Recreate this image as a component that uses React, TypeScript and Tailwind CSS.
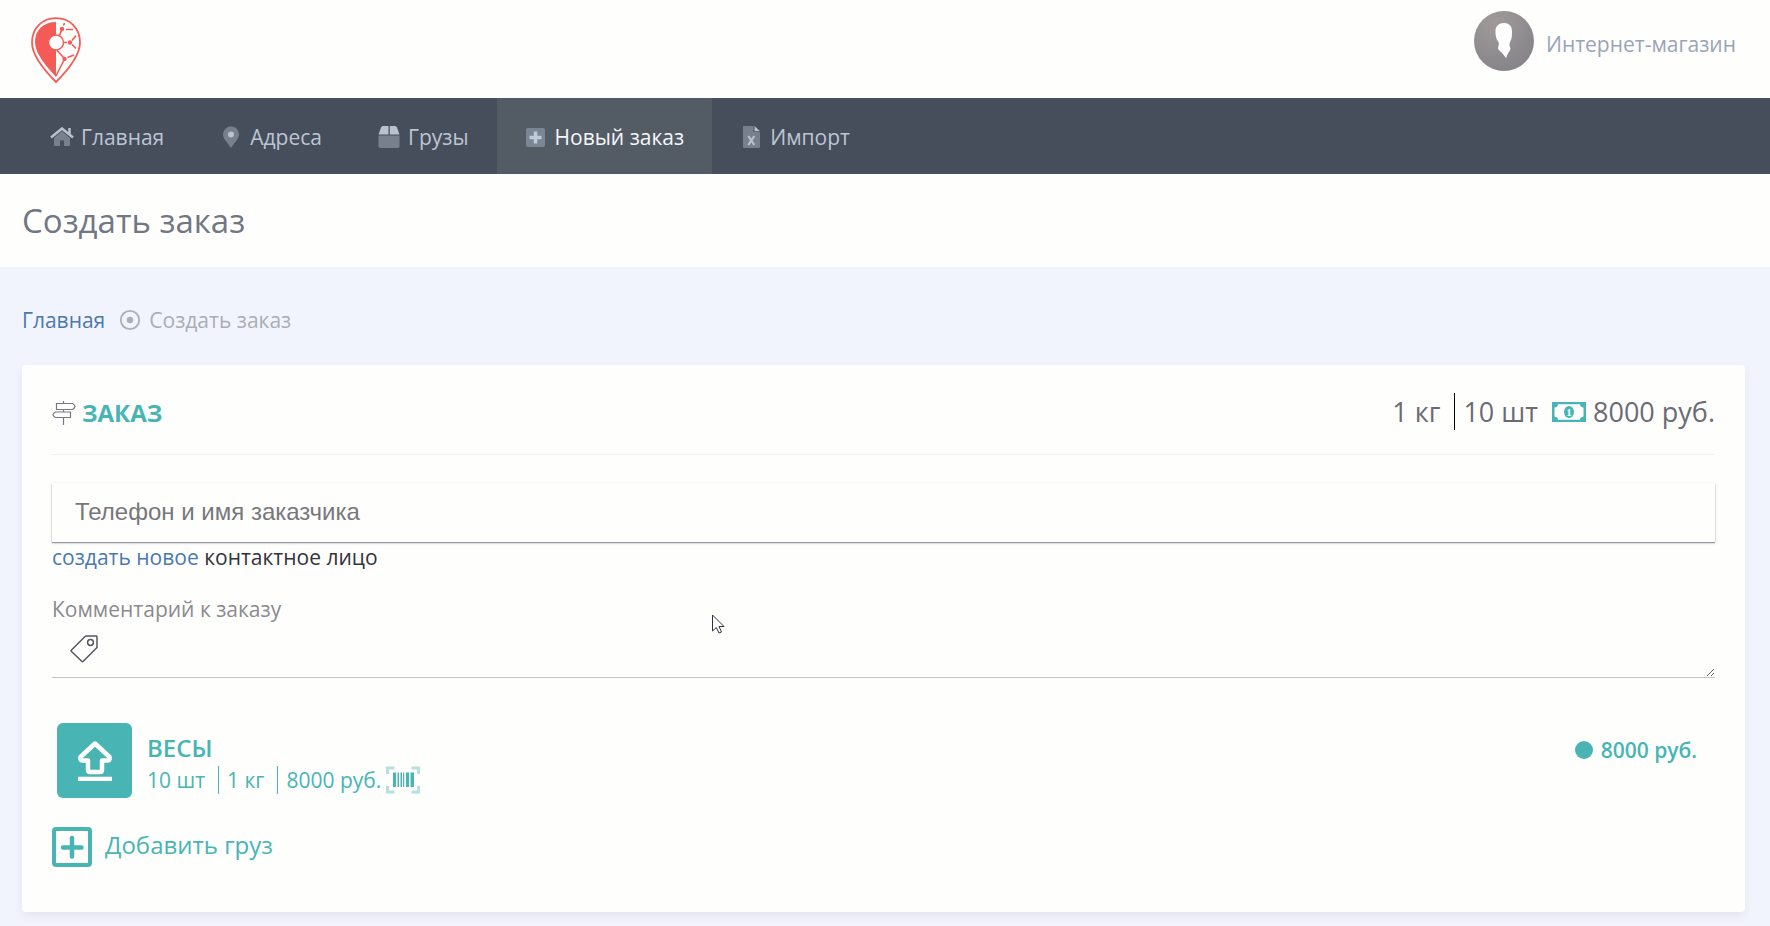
import { useState } from "react";
import type { ReactNode } from "react";

const Logo = () => (
	<svg className="h-[68px] w-[52px]" viewBox="0 0 52 68" fill="none">
		<path
			d="M26 66C18 58 2 41 2 26.500C2 12 12.500 2.200 26 2.200S50 12 50 26.500C50 41 34 58 26 66Z"
			stroke="#f45b56"
			strokeWidth="1.800"
		/>
		<path
			d="M26 6C13.500 6 5 14 5 26C5 38 17 51 26 61V34A7 7 0 0 1 26 19Z"
			fill="#f45b56"
		/>
		<circle cx="26" cy="26.500" r="7.500" stroke="#f45b56" strokeWidth="1.500" fill="#fff" />
		<g stroke="#f45b56" strokeWidth="1.600">
			<path d="M34.500 7L33.500 9.500M31.500 14L29.500 19.500M36 13.500H43" />
			<path d="M34 26.500H37M42 24.500L46 19.500M42 28.500L46 32.500" />
			<path d="M27 34.500L34.500 42.500M33.500 45L26 60M37.500 41.500L44 39" />
		</g>
		<g fill="#f45b56">
			<circle cx="32" cy="13" r="2.200" />
			<circle cx="40" cy="26.500" r="2.200" />
			<circle cx="34.500" cy="43" r="2.200" />
		</g>
	</svg>
);

const Avatar = () => (
	<svg className="h-[60px] w-[60px]" viewBox="0 0 60 60">
		<defs>
			<radialGradient id="avatar" cx="0.35" cy="0.2" r="0.8">
				<stop offset="0" stopColor="#a09a9a" />
				<stop offset="1" stopColor="#87858a" />
			</radialGradient>
		</defs>
		<circle cx="30" cy="30" r="30" fill="url(#avatar)" />
		<path
			d="M30 12C25 12 21.500 15 21.500 20C21.500 25 22 28 24.500 31C25.500 34 24 35 24 37.500C24.500 39.500 27 40.500 28.500 42.500L32 47L34 42.500C35 40.500 36 40 36.500 37.500C35.500 35 35 34 36 31C38 28 38 24 38 20C38 15 35 12 30 12Z"
			fill="#fff"
		/>
	</svg>
);

const HomeIcon = () => (
	<svg className="h-5 w-6" viewBox="0 0 24 20">
		<path d="M4 11L12 4L20 11V18Q20 19 19 19H14V13.500H10V19H5Q4 19 4 18Z" fill="#787f8d" />
		<path
			d="M1 10.500L12 1.500L23 10.500M19.500 1V7"
			fill="none"
			stroke="#b9c2d0"
			strokeWidth="2.500"
		/>
	</svg>
);

const PinIcon = () => (
	<svg className="h-[22px] w-[18px]" viewBox="0 0 18 22">
		<path
			d="M9 22C6 17 1 13 1 8.500A8 8 0 0 1 17 8.500C17 13 12 17 9 22Z"
			fill="#787f8d"
		/>
		<circle cx="9" cy="8.500" r="3" fill="#b9c2d0" />
	</svg>
);

const BoxIcon = () => (
	<svg className="h-[22px] w-[22px]" viewBox="0 0 22 22">
		<path d="M0.500 9.500H21.500V20Q21.500 22 19.500 22H2.500Q0.500 22 0.500 20Z" fill="#787f8d" />
		<path d="M10.500 0V8.500H0.500L3 1.500Q3.500 0 5 0ZM11.800 0V8.500H21.500L19 1.500Q18.500 0 17 0Z" fill="#b9c2d0" />
	</svg>
);

const PlusIcon = () => (
	<svg className="h-[19px] w-[19px]" viewBox="0 0 19 19">
		<rect width="19" height="19" rx="2" fill="#7b8694" />
		<path d="M9.500 3.500V15.500M3.500 9.500H15.500" stroke="#c0c9d6" strokeWidth="3.500" />
	</svg>
);

const ImportIcon = () => (
	<svg className="h-[22px] w-[17px]" viewBox="0 0 17 22">
		<path d="M1 0H10.500V6H17V21Q17 22 16 22H1Q0 22 0 21V1Q0 0 1 0Z" fill="#787f8d" />
		<path d="M11.500 0L17 5.200H11.500Z" fill="#b9c2d0" />
		<path d="M5.300 10L11.300 19M11.300 10L5.300 19" stroke="#b9c2d0" strokeWidth="2.200" />
	</svg>
);

const SignIcon = () => (
	<svg className="h-6 w-6" viewBox="0 0 24 24" fill="none" stroke="#7c7883" strokeWidth="1.200">
		<path d="M11.500 0V2.500M11.500 8.500V11M11.500 16.500V24" />
		<path d="M4.500 2.500H20.500Q22.500 3.500 23 5.500Q22.500 7.500 20.500 8.500H4.500Z" />
		<path d="M3.500 11H18.500V16.500H3.500Q1.500 15.500 1 13.800Q1.500 12 3.500 11Z" />
	</svg>
);

const CashIcon = () => (
	<svg className="h-5 w-[34px]" viewBox="0 0 34 20">
		<rect width="34" height="20" fill="#48b5b4" />
		<path
			d="M6 2.200H28Q28 5 31.500 5.500V14.500Q28 15 28 17.800H6Q6 15 2.500 14.500V5.500Q6 5 6 2.200Z"
			fill="#fff"
		/>
		<ellipse cx="17" cy="10" rx="5" ry="6" fill="#48b5b4" />
		<text
			x="17"
			y="14"
			textAnchor="middle"
			fontFamily="Liberation Serif, serif"
			fontWeight="700"
			fontSize="11"
			fill="#fff"
		>
			1
		</text>
	</svg>
);

const TagIcon = () => (
	<svg
		className="h-7 w-7"
		viewBox="0 0 28 28"
		fill="none"
		stroke="#55565f"
		strokeWidth="1.500"
		strokeLinejoin="round"
	>
		<path d="M1 15.500L15 1.500Q15.500 1 16.500 1H26.500Q27 1 27 2V12.500L13 26.500Q12.500 27 12 26.500L1.500 16.500Q1 16 1 15.500Z" />
		<circle cx="20.500" cy="7.500" r="2.900" />
	</svg>
);

const UploadIcon = () => (
	<svg className="h-10 w-9" viewBox="0 0 36 40" fill="none" stroke="#fff" strokeWidth="4.500">
		<path
			d="M18 2.500L32.500 16Q33 19.500 31 19.500H25V29Q25 31 23 31H13Q11 31 11 29V19.500H5Q3 19.500 3.500 16Z"
			strokeLinejoin="round"
		/>
		<path d="M1 38H35" />
	</svg>
);

const BarcodeIcon = () => (
	<svg className="h-7 w-9" viewBox="0 0 36 28">
		<path
			d="M2.500 8V2H9.500M26.500 2H33.500V8M33.500 20V26H26.500M9.500 26H2.500V20"
			fill="none"
			stroke="#b6dfdf"
			strokeWidth="3"
		/>
		<path
			d="M8 6.500H11V21H8ZM12.500 6.500H14V21H12.500ZM15.500 6.500H17V21H15.500ZM18 6.500H19.200V21H18ZM21 6.500H24V21H21ZM25.500 6.500H29V21H25.500Z"
			fill="#48b5b4"
		/>
	</svg>
);

const AddIcon = () => (
	<svg className="h-10 w-10" viewBox="0 0 40 40" fill="none" stroke="#48b5b4">
		<rect x="2" y="2" width="36" height="36" rx="2" strokeWidth="4" />
		<path d="M20 11V29.500M11 20.500H29.500" strokeWidth="4.500" strokeLinecap="round" />
	</svg>
);

const Cursor = () => (
	<svg
		className="pointer-events-none absolute left-[712px] top-[614px] h-5 w-[14px]"
		viewBox="0 0 14 20"
	>
		<path
			d="M0.500 1V17L4.300 13.500L7 19L9.500 18L7 12.500H12Z"
			fill="#fff"
			stroke="#33313b"
			strokeWidth="1"
		/>
	</svg>
);

const menu: { text: string; icon: ReactNode; active?: boolean }[] = [
	{ text: "Главная", icon: <HomeIcon /> },
	{ text: "Адреса", icon: <PinIcon /> },
	{ text: "Грузы", icon: <BoxIcon /> },
	{ text: "Новый заказ", icon: <PlusIcon />, active: true },
	{ text: "Импорт", icon: <ImportIcon /> },
];

const App = () => {
	const [customer, setCustomer] = useState("");
	const [comment, setComment] = useState("");

	return (
		<div className="relative min-h-screen bg-[#f2f4fd] pb-3.5 font-['Open_Sans',sans-serif] text-[21px] leading-7">
			<header className="flex h-[98px] items-start justify-between bg-[#fefefd] pl-[30px] pr-[34px]">
				<a href="#" aria-label="Главная" className="mt-4">
					<Logo />
				</a>
				<a href="#" className="mt-[11px] flex items-center gap-3 text-[#98a5b8]">
					<Avatar />
					<span className="pt-1.5">Интернет-магазин</span>
				</a>
			</header>

			<nav className="flex h-[76px] bg-[#464e5b] pl-[23px]">
				{menu.map((item) => (
					<a
						key={item.text}
						href="#"
						className={
							item.active
								? "flex items-center gap-[7px] bg-[#535b65] pl-[27px] pr-7 pt-0.5 text-[#f4f6fa]"
								: "flex items-center gap-[7px] pl-[27px] pr-7 pt-0.5 text-[#bcc5d3]"
						}
					>
						<span className="flex w-6 justify-center">{item.icon}</span>
						{item.text}
					</a>
				))}
			</nav>

			<div className="flex h-[93px] items-center bg-[#fefefd] px-[22px]">
				<h1 className="text-[33px] leading-[44px] text-[#717783]">Создать заказ</h1>
			</div>

			<main className="pl-[22px] pr-[25px]">
				<div className="flex h-[98px] items-center gap-3.5 pt-2">
					<a href="#" className="text-[#4a79ad]">
						Главная
					</a>
					<span className="flex items-center gap-2 text-[#a9adb5]">
						<svg className="h-[22px] w-[22px]" viewBox="0 0 22 22">
							<circle cx="11" cy="11" r="9.200" fill="none" stroke="#a9b0bd" strokeWidth="1.800" />
							<circle cx="11" cy="11" r="3.200" fill="#a9b0bd" />
						</svg>
						Создать заказ
					</span>
				</div>

				<section className="rounded-sm bg-[#fefefd] px-[30px] pb-[45px] shadow-[0_4px_8px_rgba(60,50,80,0.08)]">
					<div className="flex h-[90px] items-center justify-between border-b border-[#f0eff4] pt-1">
						<h2 className="flex items-center gap-1.5 pt-0.5 text-2xl font-bold text-[#48b5b4]">
							<SignIcon />
							ЗАКАЗ
						</h2>
						<div className="flex items-center text-[27px] text-[#6b6b75]">
							<span className="mr-2 flex h-[37px] items-center border-r border-black pr-3.5">
								1 кг
							</span>
							<span className="mr-3.5">10 шт</span>
							<CashIcon />
							<span className="ml-[7px]">8000 руб.</span>
						</div>
					</div>

					<input
						type="text"
						aria-label="Телефон и имя заказчика"
						placeholder="Телефон и имя заказчика"
						value={customer}
						onChange={(e) => setCustomer(e.target.value)}
						className="mt-7 block h-[59px] w-full px-[23px] pb-px font-['Liberation_Sans',sans-serif] text-2xl shadow-[0_1px_1px_rgba(40,35,60,0.4),0_1px_3px_rgba(40,35,60,0.2)] outline-none placeholder:text-[#77777b]"
					/>
					<p className="pt-px text-[#33333b]">
						<a href="#" className="text-[#4a79ad]">
							создать новое
						</a>{" "}
						контактное лицо
					</p>

					<label htmlFor="comment" className="mt-6 block text-[#8a8a8f]">
						Комментарий к заказу
					</label>
					<div className="relative">
						<textarea
							id="comment"
							value={comment}
							onChange={(e) => setComment(e.target.value)}
							className="block h-[55px] w-full resize-y border-b border-[#c4c5c9] py-2 pl-14 outline-none"
						/>
						<span className="pointer-events-none absolute left-[18px] top-3">
							<TagIcon />
						</span>
					</div>

					<div className="mt-[45px] flex items-start justify-between pl-[5px] pr-[18px] text-[#48b5b4]">
						<div className="flex gap-[15px]">
							<button
								type="button"
								aria-label="Загрузить"
								className="flex h-[75px] w-[75px] items-center justify-center rounded-md bg-[#48b5b4]"
							>
								<UploadIcon />
							</button>
							<div className="pt-[11px]">
								<h3 className="text-2xl/7 font-semibold">ВЕСЫ</h3>
								<div className="mt-1 flex items-center">
									<span className="mr-2 border-r border-[#48b5b4] pr-[13px]">10 шт</span>
									<span className="mr-2 border-r border-[#48b5b4] pr-[13px]">1 кг</span>
									<span className="mr-1">8000 руб.</span>
									<BarcodeIcon />
								</div>
							</div>
						</div>
						<div className="mt-[13px] flex items-center gap-2 font-semibold">
							<span className="h-[18px] w-[18px] rounded-full bg-[#48b5b4]" />
							8000 руб.
						</div>
					</div>

					<button
						type="button"
						className="mt-[29px] flex items-center gap-[13px] text-2xl text-[#48b5b4]"
					>
						<AddIcon />
						<span className="pb-1">Добавить груз</span>
					</button>
				</section>
			</main>

			<Cursor />
		</div>
	);
};

export default App;
